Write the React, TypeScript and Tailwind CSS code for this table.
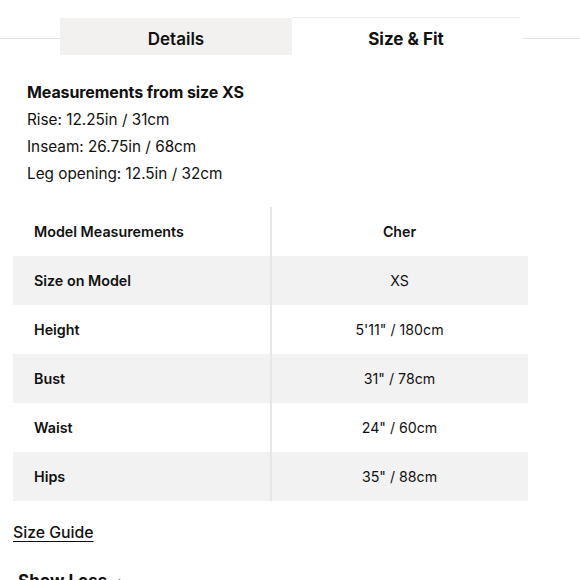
import { ChevronUp } from 'lucide-react'

const rows = [
    { label: 'Model Measurements', value: 'Cher', header: true },
    { label: 'Size on Model', value: 'XS' },
    { label: 'Height', value: '5\'11" / 180cm' },
    { label: 'Bust', value: '31" / 78cm' },
    { label: 'Waist', value: '24" / 60cm' },
    { label: 'Hips', value: '35" / 88cm' },
]

export default function App() {
    return (
        <div className="w-[580px] h-[580px] overflow-hidden bg-white text-[#111] font-['Inter',sans-serif]">
            {/* Tabs */}
            <div className="flex items-start pt-[17px]">
                <div className="w-[60px] mt-[21px] h-px bg-[#e4e3e1]" />
                <button className="w-[232px] h-[37px] bg-[#f2f1ef] text-[17px] font-semibold leading-none mt-px pt-[5px]">
                    Details
                </button>
                <button className="w-[228px] h-[38px] bg-white border-t border-[#ecebe9] text-[17px] font-bold leading-none pt-[6px]">
                    Size &amp; Fit
                </button>
                <div className="flex-1 mt-[21px] h-px bg-[#e4e3e1] ml-[3px]" />
            </div>

            {/* Measurements */}
            <div className="pl-[27px] pt-[24px] text-[15.3px] leading-[27px]">
                <p className="font-bold text-[16px] tracking-[-0.1px]">Measurements from size XS</p>
                <p>Rise: 12.25in / 31cm</p>
                <p>Inseam: 26.75in / 68cm</p>
                <p>Leg opening: 12.5in / 32cm</p>
            </div>

            {/* Model table */}
            <div className="ml-[13px] mt-[20px] w-[515px] relative">
                {rows.map((r, i) => (
                    <div
                        key={r.label}
                        className={`flex h-[49px] items-center ${i % 2 === 1 ? 'bg-[#f2f2f2]' : 'bg-white'}`}
                    >
                        <div className="w-[258px] pl-[21px] text-[14.3px] font-semibold">{r.label}</div>
                        <div className={`flex-1 text-center text-[14.2px] ${r.header ? 'font-semibold' : ''}`}>{r.value}</div>
                    </div>
                ))}
                <div className="absolute left-[257px] top-0 bottom-0 w-[2px] bg-[#e8e7e5]" />
            </div>

            {/* Links */}
            <div className="pl-[13px] pt-[19px] leading-[24px]">
                <a className="text-[15.8px] font-medium underline underline-offset-[3px] decoration-1">Size Guide</a>
            </div>
            <div className="pl-[18px] pt-[24px] flex items-center gap-[6px] text-[17px] leading-[24px] font-bold">
                <span>Show Less</span>
                <ChevronUp size={13} strokeWidth={2.5} />
            </div>
        </div>
    )
}
